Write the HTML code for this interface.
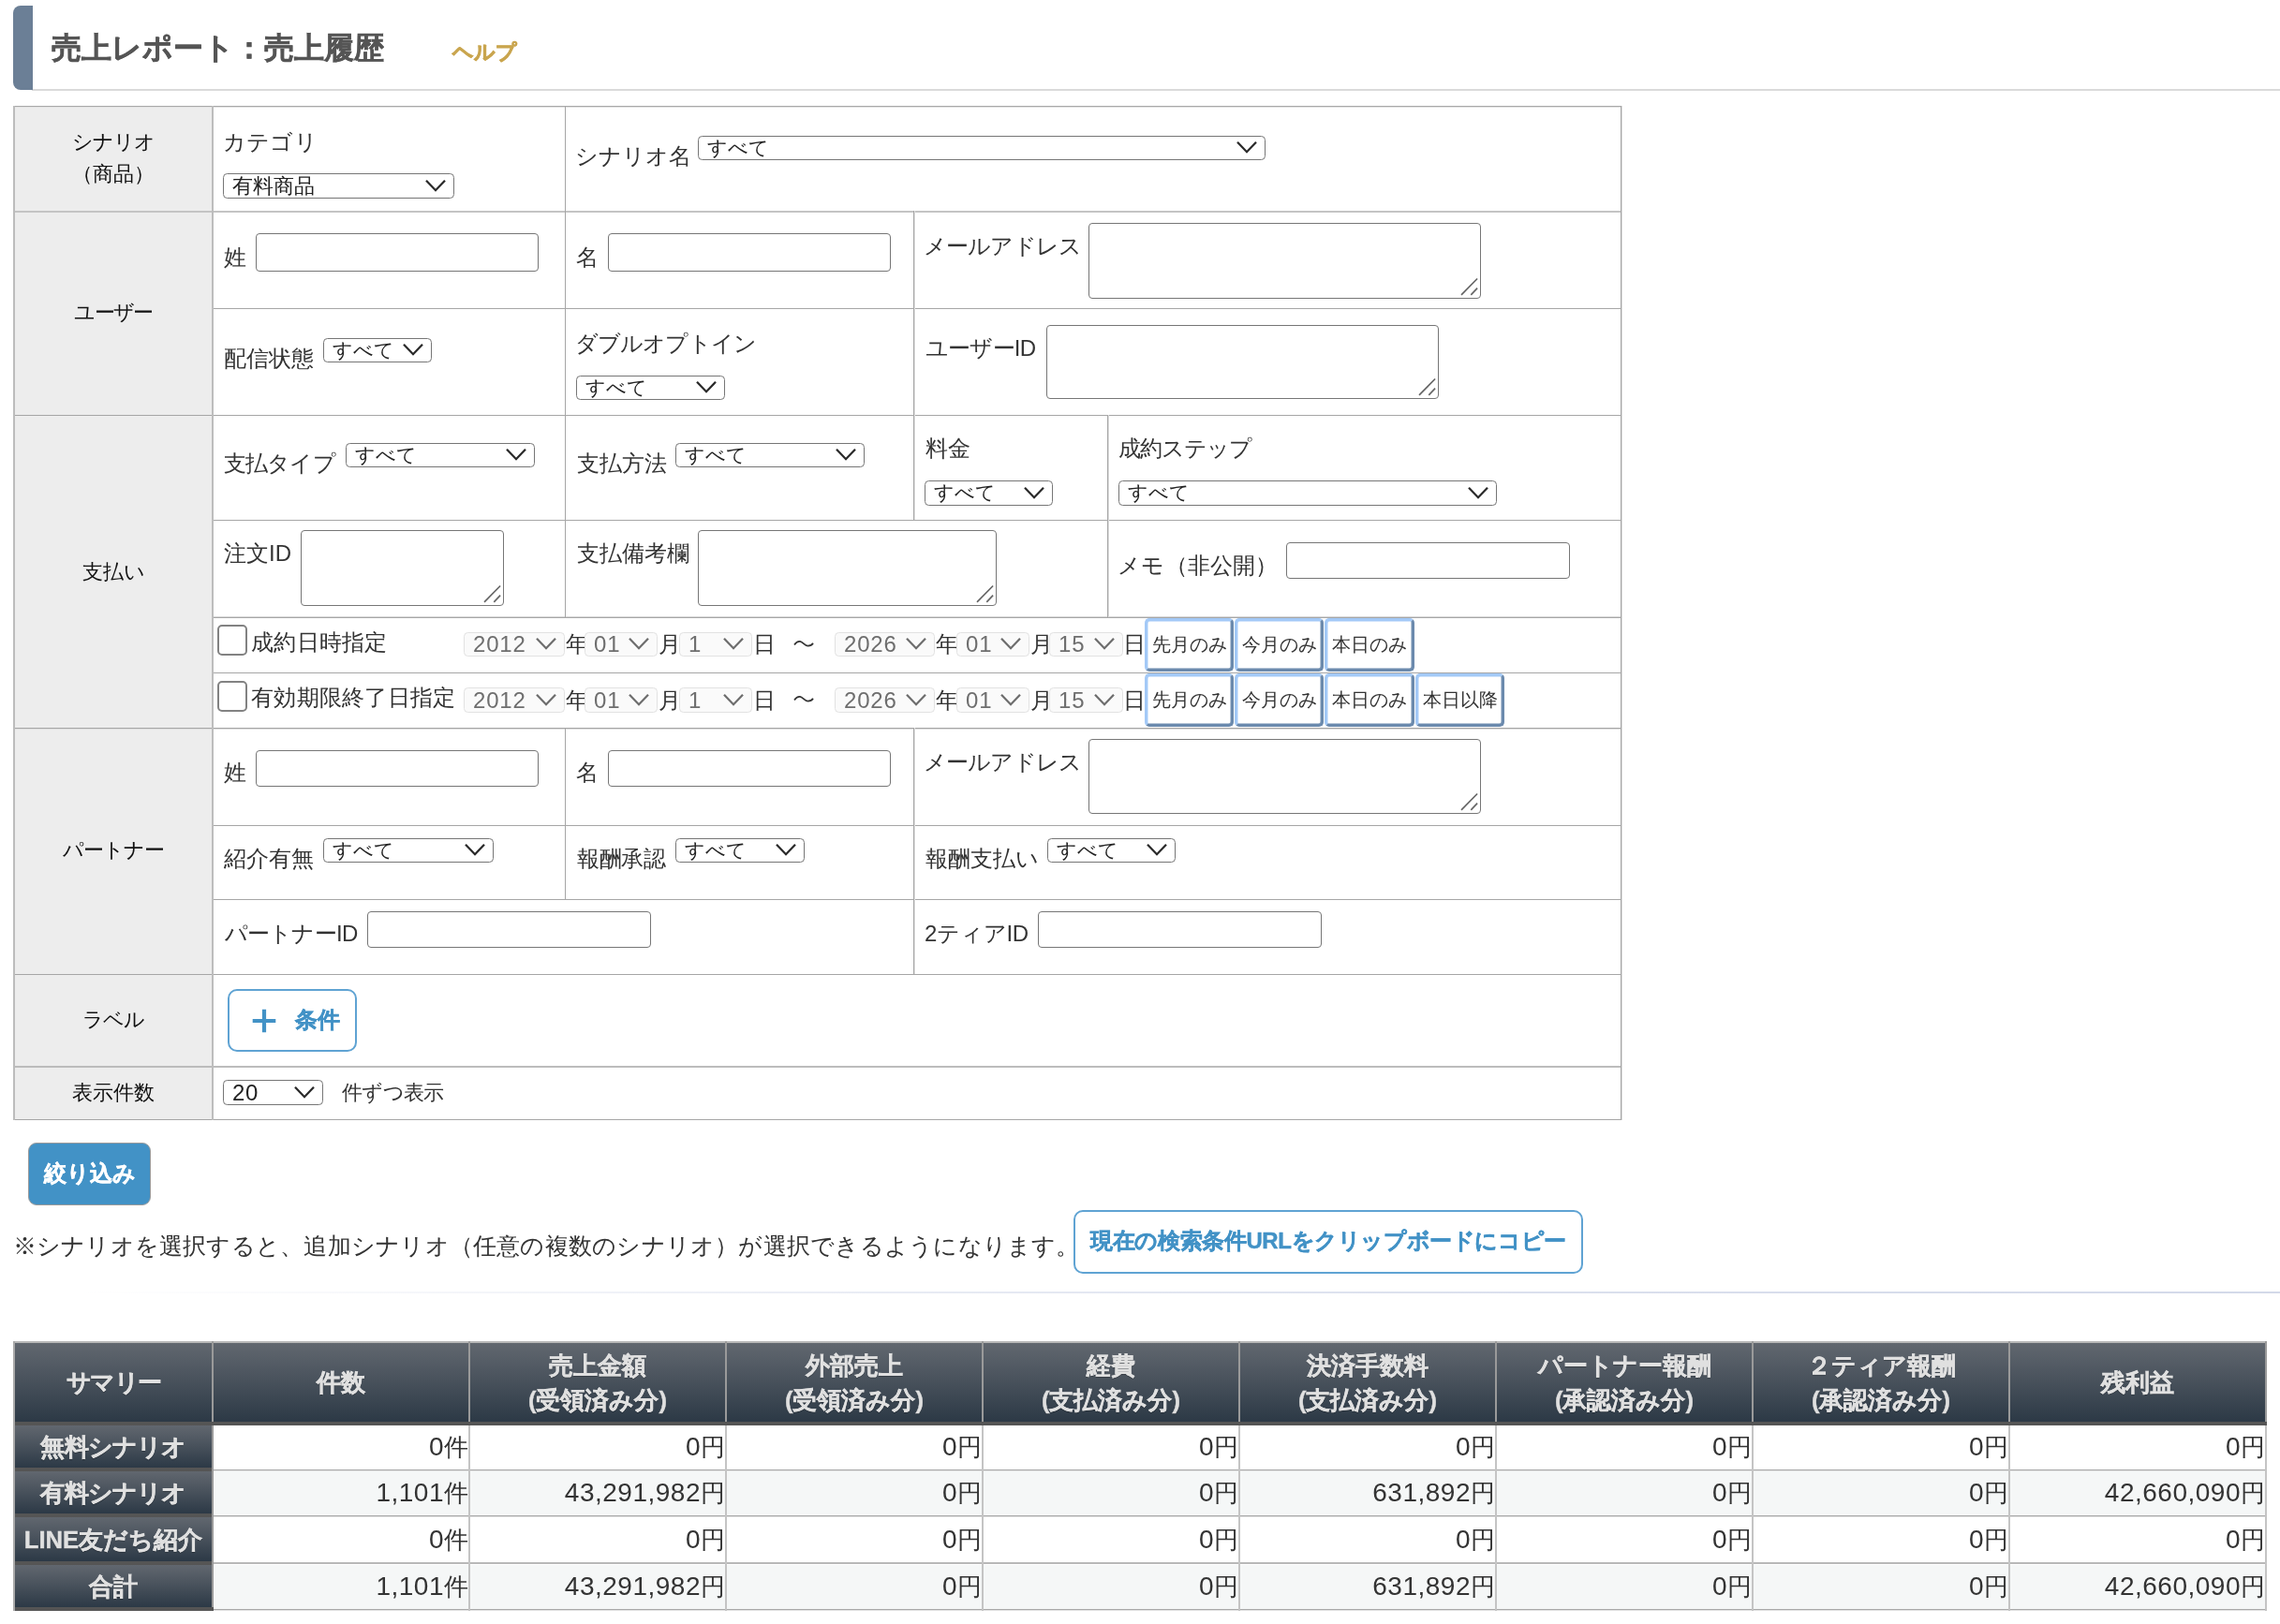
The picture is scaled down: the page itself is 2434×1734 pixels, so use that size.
<!DOCTYPE html>
<html lang="ja">
<head>
<meta charset="utf-8">
<title>売上レポート：売上履歴</title>
<style>
html,body{margin:0;padding:0;background:#fff}
body{width:2434px;height:1734px;position:relative;overflow:hidden;will-change:transform;font-family:"Liberation Sans",sans-serif;color:#333}
body div,body svg{position:absolute;box-sizing:border-box}
.t{height:40px;line-height:40px;white-space:nowrap;font-size:24px;color:#333}
.c{text-align:center}
.r{text-align:right}
.th{font-size:22px;color:#111}
.title{font-size:32px;font-weight:bold;color:#555;-webkit-text-stroke:0.5px #555}
.help{font-size:22.4px;font-weight:bold;color:#c9a54e;-webkit-text-stroke:0.8px #c9a54e}
.d{font-size:24px;color:#333}
.s22{font-size:21.6px}
.note{font-size:25.4px;letter-spacing:0.23px}
.sel{border:1px solid #767676;border-radius:4.5px;background:#fff;font-size:21.33px;color:#222;padding-left:9px;white-space:nowrap;overflow:hidden}
.sel span{position:relative}
.sel.dis{border-color:#e2e2e2;background:#fafafa;color:#6e6e6e;font-size:24px;padding-left:9px;letter-spacing:0.8px}
.inp{border:1px solid #767676;border-radius:4px;background:#fff}
.cb{border:2px solid #828282;border-radius:5px;background:#fff}
.btn{border:3px solid;border-color:#a3c9f7 #6b8aad #6b8aad #a3c9f7;border-radius:5px;background:#fff;box-shadow:inset 0.45px 0.45px 0 0 #a3c9f7,inset -0.45px -0.45px 0 0 #6b8aad;font-size:20px;color:#333;text-align:center;white-space:nowrap}
.obtn{border:2px solid #5fa3d3;border-radius:10px;background:#fff}
.ob{font-size:24px;font-weight:bold;color:#4292c6;-webkit-text-stroke:0.4px #4292c6}
.cp{font-size:24px;letter-spacing:-0.4px;font-weight:bold;color:#4292c6;-webkit-text-stroke:0.4px #4292c6}
.sbtn{border:1px solid #9a9a9a;border-radius:9px;background:#4292c6}
.sb{font-size:24px;font-weight:bold;color:#fff;-webkit-text-stroke:0.4px #fff}
.sh{font-size:25.6px;font-weight:bold;color:#e0e0e0;-webkit-text-stroke:0.4px #e0e0e0;text-shadow:0 1px 1px rgba(0,0,0,.35)}
.sd{font-size:25.6px;color:#333}
.k22{font-weight:normal;font-size:22px}
.n20{font-weight:normal;font-size:24px;letter-spacing:0.6px}
.n{font-size:28px;letter-spacing:0.5px}
</style>
</head>
<body>
<div style="left:34px;top:95px;width:2400px;height:2px;background:#dadada;"></div>
<div style="left:14px;top:6px;width:20.5px;height:90px;background:#6b7f96;border-radius:8px 0 0 8px"></div>
<div class="t title" style="left:55px;top:31px;">売上レポート：売上履歴</div>
<div class="t help" style="left:483px;top:35.5px;">ヘルプ</div>
<div style="left:16px;top:114px;width:210px;height:1081px;background:#ededed;"></div>
<div style="left:14px;top:113px;width:1717px;height:1px;background:#a9a9a9;"></div>
<div style="left:14px;top:225px;width:1717px;height:2px;background:#c4c4c4;"></div>
<div style="left:226px;top:329px;width:1505px;height:1px;background:#a6a6a6;"></div>
<div style="left:14px;top:443px;width:1717px;height:1px;background:#a6a6a6;"></div>
<div style="left:226px;top:555px;width:1505px;height:1px;background:#a6a6a6;"></div>
<div style="left:226px;top:659px;width:1505px;height:1px;background:#a6a6a6;"></div>
<div style="left:226px;top:718px;width:1505px;height:1px;background:#a6a6a6;"></div>
<div style="left:14px;top:777px;width:1717px;height:1px;background:#a6a6a6;"></div>
<div style="left:226px;top:881px;width:1505px;height:1px;background:#a6a6a6;"></div>
<div style="left:226px;top:960px;width:1505px;height:1px;background:#a6a6a6;"></div>
<div style="left:14px;top:1040px;width:1717px;height:1px;background:#a6a6a6;"></div>
<div style="left:14px;top:1138px;width:1717px;height:2px;background:#bcbcbc;"></div>
<div style="left:14px;top:1195px;width:1717px;height:1px;background:#a6a6a6;"></div>
<div style="left:226px;top:658px;width:1505px;height:1px;background:#dadada;"></div>
<div style="left:14px;top:778px;width:1717px;height:1px;background:#dedede;"></div>
<div style="left:14px;top:114px;width:1717px;height:1px;background:#e2e2e2;"></div>
<div style="left:14px;top:113px;width:2px;height:1083px;background:#bcbcbc;"></div>
<div style="left:1730px;top:113px;width:1px;height:1083px;background:#a6a6a6;"></div>
<div style="left:1731px;top:113px;width:1px;height:1083px;background:#dcdcdc;"></div>
<div style="left:226px;top:113px;width:2px;height:1083px;background:#bdbdbd;"></div>
<div style="left:603px;top:113px;width:1px;height:546px;background:#a6a6a6;"></div>
<div style="left:975px;top:225px;width:1px;height:330px;background:#a6a6a6;"></div>
<div style="left:976px;top:225px;width:1px;height:330px;background:#e0e0e0;"></div>
<div style="left:1182px;top:443px;width:1px;height:216px;background:#a6a6a6;"></div>
<div style="left:1183px;top:443px;width:1px;height:216px;background:#dcdcdc;"></div>
<div style="left:603px;top:777px;width:1px;height:183px;background:#a6a6a6;"></div>
<div style="left:975px;top:777px;width:1px;height:263px;background:#a6a6a6;"></div>
<div style="left:976px;top:777px;width:1px;height:263px;background:#e0e0e0;"></div>
<div class="t c th" style="left:16px;width:210px;top:132px;letter-spacing:-1px;">シナリオ</div>
<div class="t c th" style="left:16px;width:210px;top:166px;">（商品）</div>
<div class="t c th" style="left:16px;width:210px;top:314px;letter-spacing:-1.6px;">ユーザー</div>
<div class="t c th" style="left:16px;width:210px;top:590.5px;">支払い</div>
<div class="t c th" style="left:16px;width:210px;top:887.5px;letter-spacing:-1.2px;">パートナー</div>
<div class="t c th" style="left:16px;width:210px;top:1069px;letter-spacing:-0.8px;">ラベル</div>
<div class="t c th" style="left:16px;width:210px;top:1147px;">表示件数</div>
<div class="t l" style="left:237.7px;top:131.6px;letter-spacing:0.3px;">カテゴリ</div>
<div class="sel" style="left:238px;top:185px;width:247px;height:27px;line-height:25px"><span><b class="k22">有料商品</b></span><svg style="left:213px;top:2.8px" width="26" height="18" viewBox="0 0 26 18"><path d="M3 3.8 L13 14.2 L23 3.8" fill="none" stroke="#2b2b2b" stroke-width="2.3"/></svg></div>
<div class="t l" style="left:613.7px;top:146.6px;">シナリオ名</div>
<div class="sel" style="left:745px;top:145px;width:606px;height:26px;line-height:24px"><span>すべて</span><svg style="left:572px;top:2.3px" width="26" height="18" viewBox="0 0 26 18"><path d="M3 3.8 L13 14.2 L23 3.8" fill="none" stroke="#2b2b2b" stroke-width="2.3"/></svg></div>
<div class="t l" style="left:239px;top:254.8px;">姓</div>
<div class="inp" style="left:273px;top:249px;width:302px;height:41px"></div>
<div class="t l" style="left:615px;top:254.8px;">名</div>
<div class="inp" style="left:649px;top:249px;width:302px;height:41px"></div>
<div class="t l" style="left:985.8px;top:242.60000000000002px;letter-spacing:-0.77px;">メールアドレス</div>
<div class="inp" style="left:1162px;top:238px;width:419px;height:81px"><svg style="left:393px;top:55px" width="24" height="24" viewBox="0 0 24 24"><path d="M4 20.8 L21.1 3.5 M14.3 20.8 L21.1 13.7" fill="none" stroke="#666" stroke-width="1.7"/></svg></div>
<div class="t l" style="left:239px;top:363px;">配信状態</div>
<div class="sel" style="left:345px;top:361px;width:116px;height:26px;line-height:24px"><span>すべて</span><svg style="left:82px;top:2.3px" width="26" height="18" viewBox="0 0 26 18"><path d="M3 3.8 L13 14.2 L23 3.8" fill="none" stroke="#2b2b2b" stroke-width="2.3"/></svg></div>
<div class="t l" style="left:613.5px;top:347.4px;letter-spacing:-0.79px;">ダブルオプトイン</div>
<div class="sel" style="left:615px;top:401px;width:159px;height:26px;line-height:24px"><span>すべて</span><svg style="left:125px;top:2.3px" width="26" height="18" viewBox="0 0 26 18"><path d="M3 3.8 L13 14.2 L23 3.8" fill="none" stroke="#2b2b2b" stroke-width="2.3"/></svg></div>
<div class="t l" style="left:988px;top:352px;letter-spacing:-0.8px;">ユーザーID</div>
<div class="inp" style="left:1117px;top:347px;width:419px;height:79px"><svg style="left:393px;top:53px" width="24" height="24" viewBox="0 0 24 24"><path d="M4 20.8 L21.1 3.5 M14.3 20.8 L21.1 13.7" fill="none" stroke="#666" stroke-width="1.7"/></svg></div>
<div class="t l" style="left:238.6px;top:474.7px;letter-spacing:-0.75px;">支払タイプ</div>
<div class="sel" style="left:369px;top:473px;width:202px;height:26px;line-height:24px"><span>すべて</span><svg style="left:168px;top:2.3px" width="26" height="18" viewBox="0 0 26 18"><path d="M3 3.8 L13 14.2 L23 3.8" fill="none" stroke="#2b2b2b" stroke-width="2.3"/></svg></div>
<div class="t l" style="left:616px;top:474.7px;">支払方法</div>
<div class="sel" style="left:721px;top:473px;width:202px;height:26px;line-height:24px"><span>すべて</span><svg style="left:168px;top:2.3px" width="26" height="18" viewBox="0 0 26 18"><path d="M3 3.8 L13 14.2 L23 3.8" fill="none" stroke="#2b2b2b" stroke-width="2.3"/></svg></div>
<div class="t l" style="left:987.7px;top:459px;letter-spacing:0.3px;">料金</div>
<div class="sel" style="left:987px;top:513px;width:137px;height:27px;line-height:25px"><span>すべて</span><svg style="left:103px;top:2.8px" width="26" height="18" viewBox="0 0 26 18"><path d="M3 3.8 L13 14.2 L23 3.8" fill="none" stroke="#2b2b2b" stroke-width="2.3"/></svg></div>
<div class="t l" style="left:1193.7px;top:459px;letter-spacing:-0.98px;">成約ステップ</div>
<div class="sel" style="left:1194px;top:513px;width:404px;height:27px;line-height:25px"><span>すべて</span><svg style="left:370px;top:2.8px" width="26" height="18" viewBox="0 0 26 18"><path d="M3 3.8 L13 14.2 L23 3.8" fill="none" stroke="#2b2b2b" stroke-width="2.3"/></svg></div>
<div class="t l" style="left:239px;top:571px;">注文ID</div>
<div class="inp" style="left:321px;top:566px;width:217px;height:81px"><svg style="left:191px;top:55px" width="24" height="24" viewBox="0 0 24 24"><path d="M4 20.8 L21.1 3.5 M14.3 20.8 L21.1 13.7" fill="none" stroke="#666" stroke-width="1.7"/></svg></div>
<div class="t l" style="left:616px;top:571px;">支払備考欄</div>
<div class="inp" style="left:745px;top:566px;width:319px;height:81px"><svg style="left:293px;top:55px" width="24" height="24" viewBox="0 0 24 24"><path d="M4 20.8 L21.1 3.5 M14.3 20.8 L21.1 13.7" fill="none" stroke="#666" stroke-width="1.7"/></svg></div>
<div class="t l" style="left:1193.2px;top:584.4px;letter-spacing:0.2px;">メモ（非公開）</div>
<div class="inp" style="left:1373px;top:579px;width:303px;height:39px"></div>
<div class="cb" style="left:232px;top:667px;width:32px;height:33px"></div>
<div class="t l" style="left:268px;top:666.1px;letter-spacing:0.3px;">成約日時指定</div>
<div class="sel dis" style="left:495px;top:675px;width:108px;height:26px;line-height:24px"><span>2012</span><svg style="left:74px;top:2.3px" width="26" height="18" viewBox="0 0 26 18"><path d="M3 3.8 L13 14.2 L23 3.8" fill="none" stroke="#6e6e6e" stroke-width="2.3"/></svg></div>
<div class="t d" style="left:604px;top:668px;">年</div>
<div class="sel dis" style="left:624px;top:675px;width:78px;height:26px;line-height:24px"><span>01</span><svg style="left:44px;top:2.3px" width="26" height="18" viewBox="0 0 26 18"><path d="M3 3.8 L13 14.2 L23 3.8" fill="none" stroke="#6e6e6e" stroke-width="2.3"/></svg></div>
<div class="t d" style="left:703px;top:668px;">月</div>
<div class="sel dis" style="left:725px;top:675px;width:78px;height:26px;line-height:24px"><span>1</span><svg style="left:44px;top:2.3px" width="26" height="18" viewBox="0 0 26 18"><path d="M3 3.8 L13 14.2 L23 3.8" fill="none" stroke="#6e6e6e" stroke-width="2.3"/></svg></div>
<div class="t d" style="left:803.8px;top:668px;">日</div>
<svg style="left:847px;top:681.5px" width="22" height="10" viewBox="-1 -2 22 10"><path d="M0 4.5 C2 1.5 4 0.6 6 0.8 C9 1.1 11 5.6 14.5 5.6 C17 5.6 19 4.5 20 2.8" fill="none" stroke="#333" stroke-width="1.7"/></svg>
<div class="sel dis" style="left:891px;top:675px;width:107px;height:26px;line-height:24px"><span>2026</span><svg style="left:73px;top:2.3px" width="26" height="18" viewBox="0 0 26 18"><path d="M3 3.8 L13 14.2 L23 3.8" fill="none" stroke="#6e6e6e" stroke-width="2.3"/></svg></div>
<div class="t d" style="left:999px;top:668px;">年</div>
<div class="sel dis" style="left:1021px;top:675px;width:78px;height:26px;line-height:24px"><span>01</span><svg style="left:44px;top:2.3px" width="26" height="18" viewBox="0 0 26 18"><path d="M3 3.8 L13 14.2 L23 3.8" fill="none" stroke="#6e6e6e" stroke-width="2.3"/></svg></div>
<div class="t d" style="left:1100px;top:668px;">月</div>
<div class="sel dis" style="left:1120px;top:675px;width:79px;height:26px;line-height:24px"><span>15</span><svg style="left:45px;top:2.3px" width="26" height="18" viewBox="0 0 26 18"><path d="M3 3.8 L13 14.2 L23 3.8" fill="none" stroke="#6e6e6e" stroke-width="2.3"/></svg></div>
<div class="t d" style="left:1199.2px;top:668px;">日</div>
<div class="btn" style="left:1222px;top:660px;width:95px;height:57px;line-height:51px">先月のみ</div>
<div class="btn" style="left:1318px;top:660px;width:95px;height:57px;line-height:51px">今月のみ</div>
<div class="btn" style="left:1414px;top:660px;width:96px;height:57px;line-height:51px">本日のみ</div>
<div class="cb" style="left:232px;top:727px;width:32px;height:33px"></div>
<div class="t l" style="left:268px;top:724.8px;letter-spacing:0.29px;">有効期限終了日指定</div>
<div class="sel dis" style="left:495px;top:734px;width:108px;height:27px;line-height:25px"><span>2012</span><svg style="left:74px;top:2.8px" width="26" height="18" viewBox="0 0 26 18"><path d="M3 3.8 L13 14.2 L23 3.8" fill="none" stroke="#6e6e6e" stroke-width="2.3"/></svg></div>
<div class="t d" style="left:604px;top:727.5px;">年</div>
<div class="sel dis" style="left:624px;top:734px;width:78px;height:27px;line-height:25px"><span>01</span><svg style="left:44px;top:2.8px" width="26" height="18" viewBox="0 0 26 18"><path d="M3 3.8 L13 14.2 L23 3.8" fill="none" stroke="#6e6e6e" stroke-width="2.3"/></svg></div>
<div class="t d" style="left:703px;top:727.5px;">月</div>
<div class="sel dis" style="left:725px;top:734px;width:78px;height:27px;line-height:25px"><span>1</span><svg style="left:44px;top:2.8px" width="26" height="18" viewBox="0 0 26 18"><path d="M3 3.8 L13 14.2 L23 3.8" fill="none" stroke="#6e6e6e" stroke-width="2.3"/></svg></div>
<div class="t d" style="left:803.8px;top:727.5px;">日</div>
<svg style="left:847px;top:741.0px" width="22" height="10" viewBox="-1 -2 22 10"><path d="M0 4.5 C2 1.5 4 0.6 6 0.8 C9 1.1 11 5.6 14.5 5.6 C17 5.6 19 4.5 20 2.8" fill="none" stroke="#333" stroke-width="1.7"/></svg>
<div class="sel dis" style="left:891px;top:734px;width:107px;height:27px;line-height:25px"><span>2026</span><svg style="left:73px;top:2.8px" width="26" height="18" viewBox="0 0 26 18"><path d="M3 3.8 L13 14.2 L23 3.8" fill="none" stroke="#6e6e6e" stroke-width="2.3"/></svg></div>
<div class="t d" style="left:999px;top:727.5px;">年</div>
<div class="sel dis" style="left:1021px;top:734px;width:78px;height:27px;line-height:25px"><span>01</span><svg style="left:44px;top:2.8px" width="26" height="18" viewBox="0 0 26 18"><path d="M3 3.8 L13 14.2 L23 3.8" fill="none" stroke="#6e6e6e" stroke-width="2.3"/></svg></div>
<div class="t d" style="left:1100px;top:727.5px;">月</div>
<div class="sel dis" style="left:1120px;top:734px;width:79px;height:27px;line-height:25px"><span>15</span><svg style="left:45px;top:2.8px" width="26" height="18" viewBox="0 0 26 18"><path d="M3 3.8 L13 14.2 L23 3.8" fill="none" stroke="#6e6e6e" stroke-width="2.3"/></svg></div>
<div class="t d" style="left:1199.2px;top:727.5px;">日</div>
<div class="btn" style="left:1222px;top:719px;width:95px;height:57px;line-height:51px">先月のみ</div>
<div class="btn" style="left:1318px;top:719px;width:95px;height:57px;line-height:51px">今月のみ</div>
<div class="btn" style="left:1414px;top:719px;width:96px;height:57px;line-height:51px">本日のみ</div>
<div class="btn" style="left:1511px;top:719px;width:95px;height:57px;line-height:51px">本日以降</div>
<div class="t l" style="left:239px;top:805px;">姓</div>
<div class="inp" style="left:273px;top:801px;width:302px;height:39px"></div>
<div class="t l" style="left:615px;top:805px;">名</div>
<div class="inp" style="left:649px;top:801px;width:302px;height:39px"></div>
<div class="t l" style="left:985.8px;top:793.8px;letter-spacing:-0.77px;">メールアドレス</div>
<div class="inp" style="left:1162px;top:789px;width:419px;height:80px"><svg style="left:393px;top:54px" width="24" height="24" viewBox="0 0 24 24"><path d="M4 20.8 L21.1 3.5 M14.3 20.8 L21.1 13.7" fill="none" stroke="#666" stroke-width="1.7"/></svg></div>
<div class="t l" style="left:239px;top:897px;">紹介有無</div>
<div class="sel" style="left:345px;top:895px;width:182px;height:26px;line-height:24px"><span>すべて</span><svg style="left:148px;top:2.3px" width="26" height="18" viewBox="0 0 26 18"><path d="M3 3.8 L13 14.2 L23 3.8" fill="none" stroke="#2b2b2b" stroke-width="2.3"/></svg></div>
<div class="t l" style="left:616px;top:897px;letter-spacing:-0.5px;">報酬承認</div>
<div class="sel" style="left:721px;top:895px;width:138px;height:26px;line-height:24px"><span>すべて</span><svg style="left:104px;top:2.3px" width="26" height="18" viewBox="0 0 26 18"><path d="M3 3.8 L13 14.2 L23 3.8" fill="none" stroke="#2b2b2b" stroke-width="2.3"/></svg></div>
<div class="t l" style="left:988px;top:897px;">報酬支払い</div>
<div class="sel" style="left:1118px;top:895px;width:137px;height:26px;line-height:24px"><span>すべて</span><svg style="left:103px;top:2.3px" width="26" height="18" viewBox="0 0 26 18"><path d="M3 3.8 L13 14.2 L23 3.8" fill="none" stroke="#2b2b2b" stroke-width="2.3"/></svg></div>
<div class="t l" style="left:239.6px;top:977px;letter-spacing:-0.7px;">パートナーID</div>
<div class="inp" style="left:392px;top:973px;width:303px;height:39px"></div>
<div class="t l" style="left:987px;top:977px;letter-spacing:-0.24px;">2ティアID</div>
<div class="inp" style="left:1108px;top:973px;width:303px;height:39px"></div>
<div class="obtn" style="left:243px;top:1056px;width:138px;height:67px"></div>
<svg style="left:268.2px;top:1075.5px" width="28" height="28" viewBox="0 0 28 28"><path d="M14 1.7 V26.3 M1.7 14 H26.3" stroke="#4292c6" stroke-width="4.2" fill="none"/></svg>
<div class="t ob" style="left:315px;top:1068.5px;">条件</div>
<div class="sel" style="left:238px;top:1153px;width:107px;height:27px;line-height:25px"><span><b class="n20">20</b></span><svg style="left:73px;top:2.8px" width="26" height="18" viewBox="0 0 26 18"><path d="M3 3.8 L13 14.2 L23 3.8" fill="none" stroke="#2b2b2b" stroke-width="2.3"/></svg></div>
<div class="t s22" style="left:365px;top:1147px;letter-spacing:-0.75px;">件ずつ表示</div>
<div class="sbtn" style="left:30px;top:1220px;width:131px;height:67px"></div>
<div class="t c sb" style="left:30px;width:131px;top:1233px;">絞り込み</div>
<div class="t note" style="left:13.6px;top:1310.4px;">※シナリオを選択すると、追加シナリオ（任意の複数のシナリオ）が選択できるようになります。</div>
<div class="obtn" style="left:1146px;top:1292px;width:544px;height:68px"></div>
<div class="t c cp" style="left:1146px;width:544px;top:1305.3px;">現在の検索条件URLをクリップボードにコピー</div>
<div style="left:14px;top:1379px;width:2420px;height:2px;background:linear-gradient(to right,rgba(212,218,234,0) 3%,rgba(212,218,234,.45) 33%,rgba(212,218,234,.8) 60%,#d3d9e9 100%)"></div>
<div style="left:14px;top:1432px;width:2406px;height:2px;background:#b8b8b8;"></div>
<div style="left:16px;top:1434px;width:2402px;height:84px;background:linear-gradient(to bottom,#61676f 0%,#4a535d 45%,#2c3946 100%);"></div>
<div style="left:14px;top:1518px;width:2406px;height:4px;background:#555;"></div>
<div style="left:16px;top:1522px;width:210px;height:45px;background:linear-gradient(to bottom,#61676f 0%,#4a535d 45%,#2c3946 100%);"></div>
<div style="left:14px;top:1567px;width:214px;height:4px;background:#555;"></div>
<div style="left:228px;top:1522px;width:2190px;height:49px;background:#ffffff;"></div>
<div style="left:16px;top:1571px;width:210px;height:45px;background:linear-gradient(to bottom,#61676f 0%,#4a535d 45%,#2c3946 100%);"></div>
<div style="left:14px;top:1616px;width:214px;height:4px;background:#555;"></div>
<div style="left:228px;top:1571px;width:2190px;height:49px;background:#f5f7f7;"></div>
<div style="left:16px;top:1620px;width:210px;height:47px;background:linear-gradient(to bottom,#61676f 0%,#4a535d 45%,#2c3946 100%);"></div>
<div style="left:14px;top:1667px;width:214px;height:4px;background:#555;"></div>
<div style="left:228px;top:1620px;width:2190px;height:51px;background:#ffffff;"></div>
<div style="left:16px;top:1671px;width:210px;height:45px;background:linear-gradient(to bottom,#61676f 0%,#4a535d 45%,#2c3946 100%);"></div>
<div style="left:14px;top:1716px;width:214px;height:4px;background:#555;"></div>
<div style="left:228px;top:1671px;width:2190px;height:49px;background:#f5f7f7;"></div>
<div style="left:228px;top:1569px;width:2192px;height:1px;background:#a8a8a8;"></div>
<div style="left:228px;top:1570px;width:2192px;height:1px;background:#e2e2e2;"></div>
<div style="left:228px;top:1618px;width:2192px;height:1px;background:#a8a8a8;"></div>
<div style="left:228px;top:1619px;width:2192px;height:1px;background:#e0e0e0;"></div>
<div style="left:228px;top:1668px;width:2192px;height:2px;background:#b8b8b8;"></div>
<div style="left:228px;top:1718px;width:2192px;height:1px;background:#a8a8a8;"></div>
<div style="left:228px;top:1719px;width:2192px;height:1px;background:#e2e2e2;"></div>
<div style="left:14px;top:1432px;width:2px;height:288px;background:#a9a9a9;"></div>
<div style="left:226px;top:1432px;width:2px;height:86px;background:#9a9a9a;"></div>
<div style="left:226px;top:1522px;width:2px;height:194px;background:#9a9a9a;"></div>
<div style="left:500px;top:1432px;width:2px;height:86px;background:#9a9a9a;"></div>
<div style="left:500px;top:1522px;width:2px;height:198px;background:#c4c4c4;"></div>
<div style="left:774px;top:1432px;width:2px;height:86px;background:#9a9a9a;"></div>
<div style="left:774px;top:1522px;width:2px;height:198px;background:#c4c4c4;"></div>
<div style="left:1048px;top:1432px;width:2px;height:86px;background:#9a9a9a;"></div>
<div style="left:1048px;top:1522px;width:2px;height:198px;background:#c4c4c4;"></div>
<div style="left:1322px;top:1432px;width:2px;height:86px;background:#9a9a9a;"></div>
<div style="left:1322px;top:1522px;width:2px;height:198px;background:#c4c4c4;"></div>
<div style="left:1596px;top:1432px;width:2px;height:86px;background:#9a9a9a;"></div>
<div style="left:1596px;top:1522px;width:2px;height:198px;background:#c4c4c4;"></div>
<div style="left:1870px;top:1432px;width:2px;height:86px;background:#9a9a9a;"></div>
<div style="left:1870px;top:1522px;width:2px;height:198px;background:#c4c4c4;"></div>
<div style="left:2144px;top:1432px;width:2px;height:86px;background:#9a9a9a;"></div>
<div style="left:2144px;top:1522px;width:2px;height:198px;background:#c4c4c4;"></div>
<div style="left:2418px;top:1432px;width:2px;height:86px;background:#9a9a9a;"></div>
<div style="left:2418px;top:1522px;width:2px;height:198px;background:#c4c4c4;"></div>
<div class="t c sh" style="left:16px;width:210px;top:1455.5px;letter-spacing:-1.5px;">サマリー</div>
<div class="t c sh" style="left:228px;width:272px;top:1455.5px;">件数</div>
<div class="t c sh" style="left:502px;width:272px;top:1437.6px;">売上金額</div>
<div class="t c sh" style="left:502px;width:272px;top:1474.8px;">(受領済み分)</div>
<div class="t c sh" style="left:776px;width:272px;top:1437.6px;">外部売上</div>
<div class="t c sh" style="left:776px;width:272px;top:1474.8px;">(受領済み分)</div>
<div class="t c sh" style="left:1050px;width:272px;top:1437.6px;">経費</div>
<div class="t c sh" style="left:1050px;width:272px;top:1474.8px;">(支払済み分)</div>
<div class="t c sh" style="left:1324px;width:272px;top:1437.6px;">決済手数料</div>
<div class="t c sh" style="left:1324px;width:272px;top:1474.8px;">(支払済み分)</div>
<div class="t c sh" style="left:1598px;width:272px;top:1437.6px;">パートナー報酬</div>
<div class="t c sh" style="left:1598px;width:272px;top:1474.8px;">(承認済み分)</div>
<div class="t c sh" style="left:1872px;width:272px;top:1437.6px;">２ティア報酬</div>
<div class="t c sh" style="left:1872px;width:272px;top:1474.8px;">(承認済み分)</div>
<div class="t c sh" style="left:2146px;width:272px;top:1455.5px;">残利益</div>
<div class="t c sh" style="left:16px;width:210px;top:1525.3px;letter-spacing:-0.8px;">無料シナリオ</div>
<div class="t r sd" style="left:228px;width:272px;top:1525.3px;"><span class="n">0</span>件</div>
<div class="t r sd" style="left:502px;width:272px;top:1525.3px;"><span class="n">0</span>円</div>
<div class="t r sd" style="left:776px;width:272px;top:1525.3px;"><span class="n">0</span>円</div>
<div class="t r sd" style="left:1050px;width:272px;top:1525.3px;"><span class="n">0</span>円</div>
<div class="t r sd" style="left:1324px;width:272px;top:1525.3px;"><span class="n">0</span>円</div>
<div class="t r sd" style="left:1598px;width:272px;top:1525.3px;"><span class="n">0</span>円</div>
<div class="t r sd" style="left:1872px;width:272px;top:1525.3px;"><span class="n">0</span>円</div>
<div class="t r sd" style="left:2146px;width:272px;top:1525.3px;"><span class="n">0</span>円</div>
<div class="t c sh" style="left:16px;width:210px;top:1574.2px;letter-spacing:-0.8px;">有料シナリオ</div>
<div class="t r sd" style="left:228px;width:272px;top:1574.2px;"><span class="n">1,101</span>件</div>
<div class="t r sd" style="left:502px;width:272px;top:1574.2px;"><span class="n">43,291,982</span>円</div>
<div class="t r sd" style="left:776px;width:272px;top:1574.2px;"><span class="n">0</span>円</div>
<div class="t r sd" style="left:1050px;width:272px;top:1574.2px;"><span class="n">0</span>円</div>
<div class="t r sd" style="left:1324px;width:272px;top:1574.2px;"><span class="n">631,892</span>円</div>
<div class="t r sd" style="left:1598px;width:272px;top:1574.2px;"><span class="n">0</span>円</div>
<div class="t r sd" style="left:1872px;width:272px;top:1574.2px;"><span class="n">0</span>円</div>
<div class="t r sd" style="left:2146px;width:272px;top:1574.2px;"><span class="n">42,660,090</span>円</div>
<div class="t c sh" style="left:16px;width:210px;top:1623.8px;">LINE友だち紹介</div>
<div class="t r sd" style="left:228px;width:272px;top:1623.8px;"><span class="n">0</span>件</div>
<div class="t r sd" style="left:502px;width:272px;top:1623.8px;"><span class="n">0</span>円</div>
<div class="t r sd" style="left:776px;width:272px;top:1623.8px;"><span class="n">0</span>円</div>
<div class="t r sd" style="left:1050px;width:272px;top:1623.8px;"><span class="n">0</span>円</div>
<div class="t r sd" style="left:1324px;width:272px;top:1623.8px;"><span class="n">0</span>円</div>
<div class="t r sd" style="left:1598px;width:272px;top:1623.8px;"><span class="n">0</span>円</div>
<div class="t r sd" style="left:1872px;width:272px;top:1623.8px;"><span class="n">0</span>円</div>
<div class="t r sd" style="left:2146px;width:272px;top:1623.8px;"><span class="n">0</span>円</div>
<div class="t c sh" style="left:16px;width:210px;top:1674.3px;">合計</div>
<div class="t r sd" style="left:228px;width:272px;top:1674.3px;"><span class="n">1,101</span>件</div>
<div class="t r sd" style="left:502px;width:272px;top:1674.3px;"><span class="n">43,291,982</span>円</div>
<div class="t r sd" style="left:776px;width:272px;top:1674.3px;"><span class="n">0</span>円</div>
<div class="t r sd" style="left:1050px;width:272px;top:1674.3px;"><span class="n">0</span>円</div>
<div class="t r sd" style="left:1324px;width:272px;top:1674.3px;"><span class="n">631,892</span>円</div>
<div class="t r sd" style="left:1598px;width:272px;top:1674.3px;"><span class="n">0</span>円</div>
<div class="t r sd" style="left:1872px;width:272px;top:1674.3px;"><span class="n">0</span>円</div>
<div class="t r sd" style="left:2146px;width:272px;top:1674.3px;"><span class="n">42,660,090</span>円</div>
</body>
</html>
